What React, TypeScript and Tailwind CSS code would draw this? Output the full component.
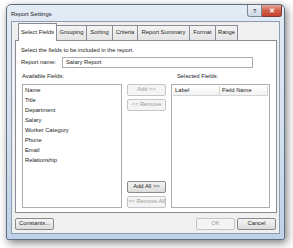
import React from 'react'

const tabs = [
  { label: 'Select Fields', w: 'w-[39px]', active: true },
  { label: 'Grouping', w: 'w-[31px]' },
  { label: 'Sorting', w: 'w-[27px]' },
  { label: 'Criteria', w: 'w-[26px]' },
  { label: 'Report Summary', w: 'w-[53px]' },
  { label: 'Format', w: 'w-[27px]' },
  { label: 'Range', w: 'w-[23px]' },
]

const fields = ['Name', 'Title', 'Department', 'Salary', 'Worker Category', 'Phone', 'Email', 'Relationship']

function Btn({ label, disabled, className }: { label: string; disabled?: boolean; className?: string }) {
  return (
    <div
      className={`h-[12px] flex items-center justify-center whitespace-nowrap overflow-hidden rounded-[2px] border leading-none ${
        disabled
          ? 'border-[#c2c6ca] bg-[#f4f4f4] text-[#9a9a9a]'
          : 'border-[#8a8a8a] bg-gradient-to-b from-[#f4f4f4] to-[#dcdcdc] text-[#1e1e1e]'
      } ${className ?? ''}`}
    >
      {label}
    </div>
  )
}

export default function App() {
  return (
    <div
      className="w-[293px] h-[248px] bg-white pt-[4px] pl-[6px] text-[5.8px] text-[#1a1a1a] overflow-hidden"
      style={{ fontFamily: '"Liberation Sans", Arial, sans-serif' }}
    >
      <div className="w-[279px] h-[236px] flex flex-col rounded-t-[5px] rounded-b-[2px] border border-[#5f6f82] bg-gradient-to-b from-[#e3ebf5] via-[#d6e2f0] to-[#bfd1e8] shadow-[2px_3px_8px_rgba(0,0,0,0.5)]">
        {/* title bar */}
        <div className="h-[16px] flex items-start justify-between pl-[4px] pr-[2px]">
          <span className="mt-[7px] text-[5.9px] leading-none text-[#1a1a1a]">Report Settings</span>
          <div className="flex">
            <div className="w-[15px] h-[12px] flex items-center justify-center rounded-bl-[3px] border border-t-0 border-[#7a8796] bg-gradient-to-b from-[#eef2f7] to-[#cdd8e5] text-[6px] font-bold text-[#3e4a58] leading-none">
              ?
            </div>
            <div className="w-[20px] h-[12px] flex items-center justify-center rounded-br-[3px] border border-t-0 border-l-0 border-[#7a3a3a] bg-gradient-to-b from-[#e8a493] via-[#d0604c] to-[#c7402e] text-[7px] font-bold text-white leading-none">
              ✕
            </div>
          </div>
        </div>

        {/* client area */}
        <div className="flex-1 mx-[4px] mb-[5px] border border-[#8c9db2] bg-[#f0f0f0] flex flex-col">
          {/* tab strip */}
          <div className="h-[18px] flex items-end pl-[6px]">
            {tabs.map((t) =>
              t.active ? (
                <div
                  key={t.label}
                  className={`${t.w} h-[18px] -mb-px relative z-10 -mr-px flex items-center justify-center whitespace-nowrap border border-b-0 border-[#898c95] bg-white leading-none`}
                >
                  {t.label}
                </div>
              ) : (
                <div
                  key={t.label}
                  className={`${t.w} h-[15px] -mr-px flex items-center justify-center whitespace-nowrap border border-b-0 border-[#898c95] bg-gradient-to-b from-[#f4f4f4] to-[#e4e4e4] leading-none`}
                >
                  {t.label}
                </div>
              )
            )}
          </div>

          {/* tab panel */}
          <div className="ml-[3px] w-[262px] h-[173px] border border-[#898c95] bg-white px-[5px] pt-[5px]">
            <div className="h-[8px] leading-[8px]">Select the fields to be included in the report.</div>
            <div className="mt-[3px] h-[11px] flex items-center">
              <span className="w-[41px] leading-none">Report name:</span>
              <div className="w-[191px] h-[11px] border border-[#abadb3] bg-white flex items-center pl-[3px] leading-none">
                Salary Report
              </div>
            </div>
            <div className="mt-[4px] h-[8px] flex leading-[8px]">
              <span className="w-[150px] pl-[1px]">Available Fields:</span>
              <span className="pl-[6px]">Selected Fields:</span>
            </div>
            <div className="mt-[4px] h-[124px] flex gap-[5px] pl-[1px]">
              <div className="w-[100px] h-full border border-[#abadb3] bg-white pl-[2px]">
                {fields.map((f) => (
                  <div key={f} className="h-[10px] leading-[10px]">
                    {f}
                  </div>
                ))}
              </div>
              <div className="w-[39px] h-full flex flex-col justify-between">
                <div className="flex flex-col gap-[3px]">
                  <Btn label="Add >>" disabled />
                  <Btn label="<< Remove" disabled />
                </div>
                <div className="flex flex-col gap-[3px]">
                  <Btn label="Add All >>" />
                  <Btn label="<< Remove All" disabled className="tracking-[-0.1px]" />
                </div>
              </div>
              <div className="w-[99px] h-full border border-[#abadb3] bg-white p-[1px]">
                <div className="h-[10px] flex border-b border-[#d5d5d5] bg-gradient-to-b from-white to-[#f2f2f2] leading-none">
                  <div className="w-[47px] flex items-center pl-[2px] border-r border-[#d5d5d5]">Label</div>
                  <div className="w-[48px] flex items-center pl-[2px] border-r border-[#d5d5d5]">Field Name</div>
                </div>
              </div>
            </div>
          </div>

          {/* bottom buttons */}
          <div className="mt-[5px] flex items-center pl-[3px] pr-[3px]">
            <Btn label="Constants..." className="w-[39px]" />
            <div className="flex-1" />
            <Btn label="OK" disabled className="w-[39px]" />
            <Btn label="Cancel" className="w-[39px] ml-[2px]" />
          </div>
        </div>
      </div>
    </div>
  )
}
